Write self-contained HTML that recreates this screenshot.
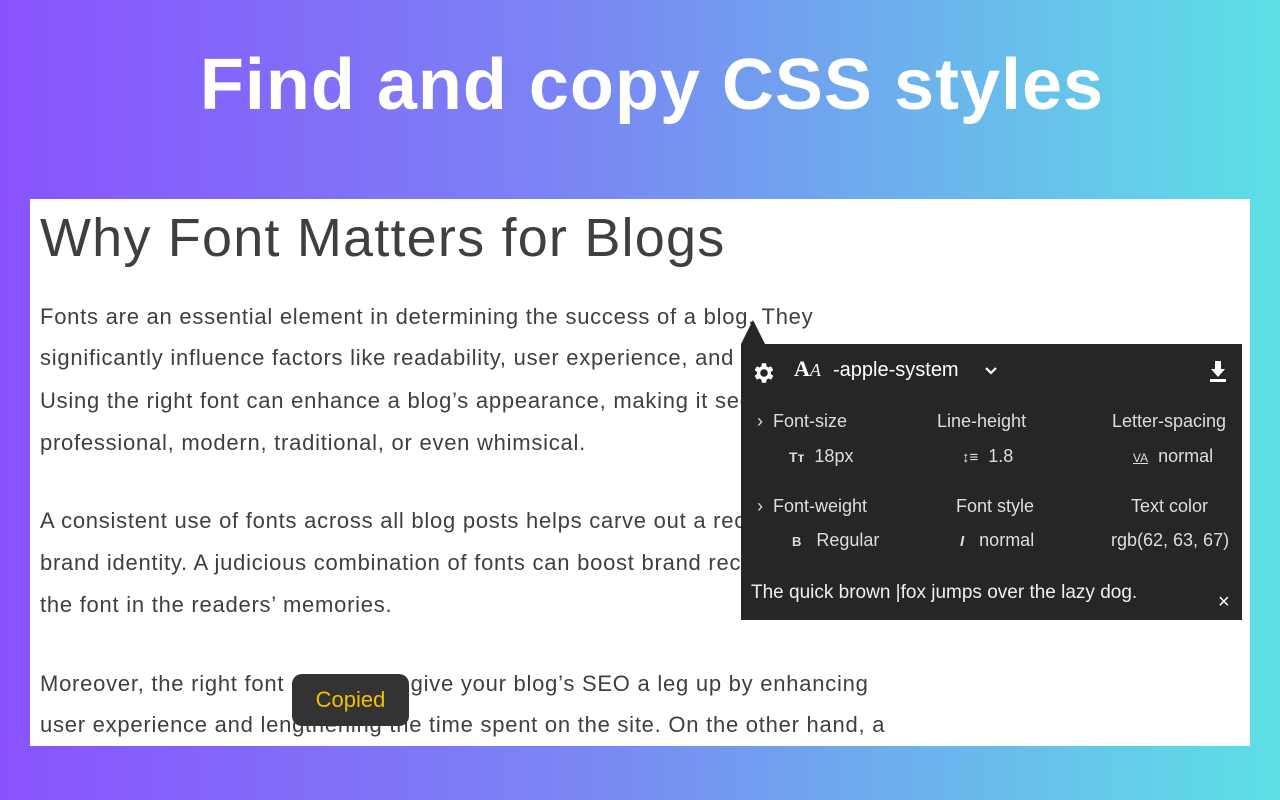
<!DOCTYPE html>
<html><head><meta charset="utf-8"><style>
*{margin:0;padding:0;box-sizing:border-box}
body{width:1280px;height:800px;overflow:hidden;position:relative;background:linear-gradient(90deg,#8a52fe 0%,#7a86f3 45%,#5de0e6 100%);font-family:"Liberation Sans",sans-serif}
h1.t{position:absolute;top:44px;left:0;width:1304px;text-align:center;color:#fff;font-size:72px;font-weight:bold;letter-spacing:1px}
.card{position:absolute;left:30px;top:199px;width:1220px;height:547px;background:#fff;overflow:hidden}
.card h2{position:absolute;left:10px;top:8px;font-size:54px;font-weight:normal;color:#3e3f43;white-space:nowrap;letter-spacing:1.2px}
.l{position:absolute;left:10px;font-size:22px;color:#3e3f43;white-space:nowrap;letter-spacing:.75px}
.panel{position:absolute;left:741px;top:344px;width:501px;height:276px;background:#262626;color:#ddd;font-size:18px}
.arrow{position:absolute;left:741px;top:320px;width:0;height:0;border-left:12px solid transparent;border-right:12px solid transparent;border-bottom:24px solid #262626}
.p{position:absolute;white-space:nowrap}
.copied{position:absolute;left:292px;top:674px;width:117px;height:52px;background:#333;border-radius:10px;color:#f0c000;font-size:22px;text-align:center;line-height:52px}
</style></head><body>
<h1 class="t">Find and copy CSS styles</h1>
<div class="card">
<h2>Why Font Matters for Blogs</h2>
<div class="l" style="top:105px">Fonts are an essential element in determining the success of a blog. They</div>
<div class="l" style="top:146px">significantly influence factors like readability, user experience, and</div>
<div class="l" style="top:189px">Using the right font can enhance a blog’s appearance, making it seem</div>
<div class="l" style="top:231px">professional, modern, traditional, or even whimsical.</div>
<div class="l" style="top:309px">A consistent use of fonts across all blog posts helps carve out a recognizable</div>
<div class="l" style="top:351px">brand identity. A judicious combination of fonts can boost brand recall by</div>
<div class="l" style="top:393px">the font in the readers’ memories.</div>
<div class="l" style="top:472px">Moreover, the right font choice can give your blog’s SEO a leg up by enhancing</div>
<div class="l" style="top:513px">user experience and lengthening the time spent on the site. On the other hand, a</div>
</div>
<div class="arrow"></div>
<div class="panel">
<svg class="p" style="left:10px;top:16px" width="26" height="26" viewBox="0 0 24 24"><path fill="#fff" d="M19.4 13a7.5 7.5 0 000-2l2.1-1.6-2-3.5-2.5 1a7 7 0 00-1.7-1L15 3h-4l-.4 2.9a7 7 0 00-1.7 1l-2.5-1-2 3.5L6.5 11a7.5 7.5 0 000 2l-2.1 1.6 2 3.5 2.5-1a7 7 0 001.7 1L11 21h4l.4-2.9a7 7 0 001.7-1l2.5 1 2-3.5zM13 15.5a3.5 3.5 0 110-7 3.5 3.5 0 010 7z" transform="translate(-1 0)"/></svg>
<div class="p" style="left:53px;top:12px;font-size:22px;color:#fff;font-weight:bold;font-family:'Liberation Serif',serif">A<span style="font-style:italic;font-size:18px;font-weight:normal">A</span></div>
<div class="p" style="left:92px;top:15px;font-size:20px;color:#fff">-apple-system</div>
<svg class="p" style="left:242px;top:21px" width="16" height="12" viewBox="0 0 16 12"><path d="M3 3l5 5 5-5" stroke="#fff" stroke-width="2.2" fill="none"/></svg>
<svg class="p" style="left:467px;top:16px" width="20" height="24" viewBox="0 0 20 24"><path fill="#fff" d="M7 1h6v8h4l-7 8-7-8h4z"/><rect x="2" y="19" width="16" height="3" fill="#fff"/></svg>
<div class="p" style="left:16px;top:67px">›&nbsp;&nbsp;Font-size</div>
<div class="p" style="left:196px;top:67px">Line-height</div>
<div class="p" style="left:371px;top:67px">Letter-spacing</div>
<div class="p" style="left:48px;top:102px"><b style="font-size:14px">Tт</b>&nbsp;&nbsp;18px</div>
<div class="p" style="left:221px;top:102px"><span style="font-size:15px">↕≡</span>&nbsp;&nbsp;1.8</div>
<div class="p" style="left:392px;top:102px"><span style="font-size:12px;text-decoration:underline">VA</span>&nbsp;&nbsp;normal</div>
<div class="p" style="left:16px;top:152px">›&nbsp;&nbsp;Font-weight</div>
<div class="p" style="left:215px;top:152px">Font style</div>
<div class="p" style="left:390px;top:152px">Text color</div>
<div class="p" style="left:51px;top:186px"><b style="font-size:13px">B</b>&nbsp;&nbsp;&nbsp;Regular</div>
<div class="p" style="left:219px;top:186px"><i style="font-weight:bold;font-size:15px">I</i>&nbsp;&nbsp;&nbsp;normal</div>
<div class="p" style="left:370px;top:186px">rgb(62, 63, 67)</div>
<div class="p" style="left:10px;top:238px;font-size:19px;color:#eee">The quick brown |fox jumps over the lazy dog.</div>
<div class="p" style="left:477px;top:247px;font-size:20px;color:#fff">×</div>
</div>
<div class="copied">Copied</div>
</body></html>
